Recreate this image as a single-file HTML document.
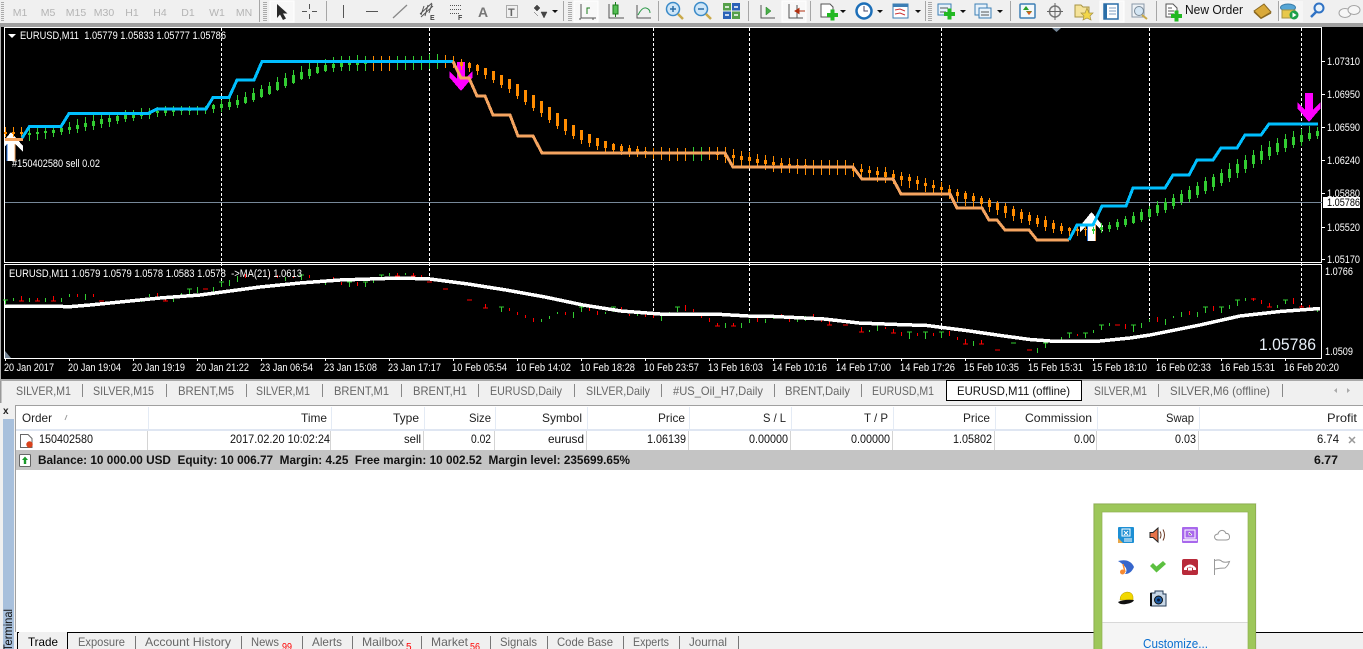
<!DOCTYPE html>
<html><head><meta charset="utf-8"><title>MT4</title>
<style>
html,body{margin:0;padding:0;background:#f0f0f0;overflow:hidden}
svg{display:block}
text{font-family:"Liberation Sans",sans-serif;white-space:pre}
.c{fill:#fff;font-size:11px}
.t{fill:#666;font-size:12px}
.h{fill:#222;font-size:12px}
.r{fill:#111;font-size:12px}
.b{fill:#111;font-size:12px;font-weight:bold}
.m{fill:#b4b4b4;font-size:10.5px;text-anchor:middle}
.red{fill:#f00;font-size:10px}
</style></head><body>
<svg width="1363" height="649" viewBox="0 0 1363 649" xmlns="http://www.w3.org/2000/svg">
<rect width="1363" height="649" fill="#f0f0f0"/>

<!-- TOOLBAR -->
<g>
<path d="M2.500 2V22" stroke="#aaa" stroke-width="3" stroke-dasharray="1 1"/>
<text class="m" x="20" y="16">M1</text><text class="m" x="48" y="16">M5</text><text class="m" x="76" y="16">M15</text><text class="m" x="104" y="16">M30</text><text class="m" x="132" y="16">H1</text><text class="m" x="160" y="16">H4</text><text class="m" x="188" y="16">D1</text><text class="m" x="217" y="16">W1</text><text class="m" x="244" y="16">MN</text>
<path d="M259.500 0V22M326.500 1V21M563.500 1V21M658.500 1V21M748.500 1V21M810.500 1V21M925.500 1V21M1010.500 1V21M1156.500 1V21M1278.500 1V21" stroke="#a6a6a6"/>
<path d="M265 2V22M570 2V22M930 2V22" stroke="#aaa" stroke-width="4" stroke-dasharray="1 1"/>
<rect x="270" y="1" width="24" height="21" fill="#f8f8f8" stroke="#fff"/>
<rect x="574" y="1" width="24" height="21" fill="#f8f8f8" stroke="#fff"/>
<rect x="782" y="1" width="24" height="21" fill="#f8f8f8" stroke="#fff"/>
<rect x="1100" y="1" width="24" height="21" fill="#f8f8f8" stroke="#fff"/>
<rect x="1279" y="1" width="24" height="21" fill="#f6f6f6"/>
<path d="M277 4V18L280 14.500L283 20L286 18.500L283 13.500H287.500Z" fill="#2a2a2a"/>
<path d="M309.500 4V9M309.500 14V19M302 11.500H307M312 11.500H317" stroke="#555" stroke-width="1"/>
<path d="M343.500 5V18" stroke="#555"/><path d="M366 11.500H378" stroke="#555"/><path d="M393 18L407 5" stroke="#888" stroke-width="1.300"/>
<path d="M420 14L432 3M421 17L433 6M424 6L421 15M428 5L425 16M432 4L429 13" stroke="#555" fill="none"/>
<text x="430" y="20" style="font-size:7px;font-weight:bold" fill="#444">E</text>
<path d="M450 5.500H462M450 9.500H462M450 13.500H460" stroke="#555" stroke-dasharray="1 1"/>
<text x="458" y="20" style="font-size:7px;font-weight:bold" fill="#444">F</text>
<text x="478" y="17" style="font-size:14px;font-weight:bold" fill="#777">A</text>
<rect x="506.500" y="5.500" width="11" height="12" fill="none" stroke="#666" stroke-dasharray="1 1"/>
<text x="508" y="16" style="font-size:11px;font-weight:bold" fill="#666">T</text>
<path d="M537 5L540 8L537 11L534 8ZM541 12L547 12L544 18Z M534 12L538 16" fill="#444" stroke="#444" stroke-width=".5"/>
<path d="M552 10H558L555 13Z" fill="#111"/>
<!-- chart type -->
<path d="M581 4V18H596M580 18V20M593 18V20" stroke="#555" fill="none"/><path d="M587 14V8H590" stroke="#1a7a1a" fill="none"/>
<path d="M609 4V18H624" stroke="#555" fill="none"/><rect x="613" y="5" width="5" height="9" fill="#55c055" stroke="#1a7a1a"/><path d="M615.500 2V5M615.500 14V17" stroke="#1a7a1a"/>
<path d="M637 5V18H651" stroke="#555" fill="none"/><path d="M638 15Q642 7 646 8T650 13" stroke="#2e9a4a" fill="none"/>
<!-- zoom -->
<circle cx="673" cy="9" r="6.500" fill="#cfe6f7" stroke="#3a8ac8" stroke-width="1.500"/><path d="M670 9H676M673 6V12" stroke="#2a6ea8" stroke-width="1.500"/><path d="M678 14L683 19" stroke="#c9a94a" stroke-width="2.500"/>
<circle cx="701" cy="9" r="6.500" fill="#cfe6f7" stroke="#3a8ac8" stroke-width="1.500"/><path d="M698 9H704" stroke="#2a6ea8" stroke-width="1.500"/><path d="M706 14L711 19" stroke="#c9a94a" stroke-width="2.500"/>
<rect x="723" y="3" width="8" height="7.500" fill="#55a04a"/><rect x="732" y="3" width="8" height="7.500" fill="#2a62b8"/><rect x="723" y="11.500" width="8" height="7.500" fill="#2a62b8"/><rect x="732" y="11.500" width="8" height="7.500" fill="#55a04a"/>
<path d="M725 7H729M734 7H738M725 15H729M734 15H738" stroke="#fff" stroke-width="1.500"/>
<path d="M761 5V18H775" stroke="#555" fill="none"/><path d="M766 7L771 11L766 15Z" fill="#49b049" stroke="#1a7a1a" stroke-width=".5"/>
<path d="M789 4V18H803M797 5V18" stroke="#555" fill="none"/><path d="M799 11H805M795 11L799 8.500V13.500Z" stroke="#b03010" fill="#b03010"/>
<path d="M821 4H830L833 7V17H821Z" fill="#fff" stroke="#555"/><rect x="827" y="13" width="11" height="4" fill="#22b822"/><rect x="830.500" y="9.500" width="4" height="11" fill="#22b822"/>
<path d="M840 10H846L843 13Z" fill="#111"/>
<circle cx="864" cy="11" r="7.500" fill="#fff" stroke="#1d6fb8" stroke-width="2.500"/><path d="M864 6V11H868" stroke="#446" fill="none"/>
<path d="M877 10H883L880 13Z" fill="#111"/>
<rect x="893" y="4" width="15" height="14" fill="#fff" stroke="#3d7fb5"/><rect x="893" y="4" width="15" height="3" fill="#3d7fb5"/><path d="M895 10L900 9L905 11M895 14L900 13L905 15" stroke="#c33" fill="none"/>
<path d="M915 10H921L918 13Z" fill="#111"/>
<rect x="938" y="4" width="13" height="11" fill="#e8f2fa" stroke="#3d7fb5"/><path d="M940 8H948M940 12H946" stroke="#555"/><rect x="944" y="12" width="11" height="4" fill="#22b822"/><rect x="947.500" y="8.500" width="4" height="11" fill="#22b822"/>
<path d="M960 10H966L963 13Z" fill="#111"/>
<rect x="975" y="4" width="12" height="11" fill="#e8f2fa" stroke="#3d7fb5"/><rect x="979" y="8" width="12" height="10" fill="#e8f2fa" stroke="#3d7fb5"/><path d="M981 12H989M981 15H989" stroke="#555"/>
<path d="M997 10H1003L1000 13Z" fill="#111"/>
<rect x="1020" y="4" width="15" height="14" rx="1" fill="#f4f8fb" stroke="#3d7fb5" stroke-width="1.500"/><path d="M1026 6L1023 10H1029ZM1029 15L1026 11H1032Z" fill="#29a029"/><path d="M1029 15L1026.500 11.500H1032Z" fill="#e05a20"/>
<circle cx="1055" cy="11.500" r="5.500" fill="none" stroke="#777" stroke-width="1.500"/><path d="M1055 3V20M1047 11.500H1063" stroke="#666"/>
<path d="M1075 5H1081L1083 7H1089V17H1075Z" fill="#f5e39a" stroke="#a89443"/><path d="M1087 8L1089 13H1093L1090 16L1091 20L1087 18L1083 20L1084 16L1081 13H1085Z" fill="#f2d648" stroke="#a89443" stroke-width=".7"/>
<rect x="1104" y="4" width="14" height="15" fill="#fff" stroke="#2a6ea8" stroke-width="1.500"/><rect x="1104" y="4" width="3" height="15" fill="#2a6ea8"/><path d="M1109 8H1116M1109 11H1116M1109 14H1116" stroke="#7d9cc0"/>
<rect x="1132" y="4" width="12" height="13" fill="#eef2f6" stroke="#8a99a8"/><circle cx="1139" cy="11" r="4.500" fill="#d4e6f4" stroke="#7a8a98"/><path d="M1142 15L1147 19" stroke="#c9a94a" stroke-width="2"/>
<path d="M1166 4H1173L1177 8V17H1166Z" fill="#fff" stroke="#555"/><path d="M1168 8H1172M1168 11H1174M1168 14H1174" stroke="#555"/><rect x="1171" y="14" width="11" height="4" fill="#22b822"/><rect x="1174.500" y="10.500" width="4" height="11" fill="#22b822"/>
<text x="1185" y="14" textLength="58" lengthAdjust="spacingAndGlyphs" style="font-size:12.500px" fill="#111">New Order</text>
<path d="M1254 11L1264 4L1271 12L1261 18Z" fill="#d9a93a" stroke="#8a6820"/><path d="M1254 12L1261 18.500L1271 13" stroke="#8a6820" fill="none"/>
<ellipse cx="1288" cy="7.500" rx="7.500" ry="3.500" fill="#56a6d6" stroke="#3a7ca8"/><path d="M1282 10H1295V18H1282Z" fill="#e8c84a" stroke="#a89443"/><circle cx="1294" cy="15" r="4.500" fill="#1ca048"/><path d="M1292.500 12.500L1296.500 15L1292.500 17.500Z" fill="#fff"/>
<circle cx="1319" cy="8" r="4.500" fill="#e8f2fa" stroke="#2f72c4" stroke-width="2"/><path d="M1316 12L1311 17" stroke="#2f72c4" stroke-width="2.500"/>
<ellipse cx="1345" cy="13" rx="6" ry="4.500" fill="#f6f6f6" stroke="#a4a4a4"/><ellipse cx="1354" cy="10" rx="6" ry="4.500" fill="#f6f6f6" stroke="#a4a4a4"/>
</g>
<rect y="23" width="1363" height="4" fill="#a0a0a0"/>

<!-- CHART -->
<rect y="27" width="1363" height="352" fill="#000"/>
<rect width="1" height="352" y="27" fill="#b0b0b0"/>
<path d="M4.500 27.500H1321.500V262.500H4.500ZM4.500 264.500H1321.500V358.500H4.500Z" fill="none" stroke="#fff"/>
<path d="M1052 28H1061L1056.500 32Z" fill="#778899"/>
<path d="M5 351L11 358H5Z" fill="#778899"/>
<path d="M1322 61.500H1325M1322 94.500H1325M1322 127.500H1325M1322 160.500H1325M1322 193.500H1325M1322 227.500H1325M1322 259.500H1325M5.500 359V361M69.500 359V361M133.500 359V361M197.500 359V361M261.500 359V361M325.500 359V361M389.500 359V361M453.500 359V361M517.500 359V361M581.500 359V361M645.500 359V361M709.500 359V361M773.500 359V361M837.500 359V361M901.500 359V361M965.500 359V361M1029.500 359V361M1093.500 359V361M1157.500 359V361M1221.500 359V361M1285.500 359V361" stroke="#fff" shape-rendering="crispEdges"/>

<!-- dashed -->
<path d="M221.500 28V287M429.500 28V279M653.500 28V313M749.500 28V312M941.500 28V330M1149.500 28V321M1301.500 28V307" stroke="#fff" stroke-dasharray="3 2" shape-rendering="crispEdges"/>
<path d="M5 202.500H1322" stroke="#778899" shape-rendering="crispEdges"/>

<!-- arrows -->
<g shape-rendering="crispEdges">
<path d="M1305 93H1313V110L1320.500 102V108.500L1309 122L1297.500 108.500V102L1305 110Z" fill="#f0f"/>
<path d="M457 62H465V79L472.500 71V77.500L461 91L449.500 77.500V71L457 79Z" fill="#f0f"/>
<path d="M7 161H15V144L23 152V146L11 132L4.500 140V147L7 144Z" fill="#fff"/>
<path d="M7 144V161" stroke="#1e6ee0"/><path d="M15 144V161" stroke="#f4a460"/>
<path d="M5 139.500H23" stroke="#f4a460" stroke-width="3"/>
<path d="M1088 241H1095V224L1103 232V226L1091.500 212L1080 226V232L1088 224Z" fill="#fff"/>
<path d="M1087.500 224V241" stroke="#1e6ee0"/><path d="M1095.500 224V241" stroke="#f4a460"/>
</g>

<!-- candles -->
<g shape-rendering="crispEdges" fill="none">
<path stroke="#32cd32" d="M29.500 127V141M37.500 127V140M45.500 127V139M53.500 125V137M61.500 124V135M69.500 122V134M77.500 119V133M85.500 117V131M93.500 115V130M101.500 115V128M109.500 114V127M117.500 113V124M125.500 110V122M133.500 110V121M141.500 108V119M149.500 108V119M157.500 107V117M165.500 106V116M173.500 106V116M181.500 106V115M189.500 106V115M197.500 106V115M205.500 106V114M213.500 104V113M221.500 100V112M229.500 97V110M237.500 95V108M245.500 92V104M253.500 88V102M261.500 85V98M269.500 82V95M277.500 77V91M285.500 73V88M293.500 70V84M301.500 66V80M309.500 63V79M317.500 61V74M325.500 59V72M333.500 57V72M341.500 56V71M349.500 56V71M357.500 55V71M365.500 56V71M397.500 56V70M405.500 56V70M413.500 56V70M421.500 56V70M429.500 54V69M437.500 54V69M693.500 147V161M701.500 147V161M1093.500 227V234M1101.500 223V233M1109.500 222V232M1117.500 219V230M1125.500 216V227M1133.500 212V224M1141.500 209V222M1149.500 206V219M1157.500 201V216M1165.500 198V213M1173.500 194V209M1181.500 190V205M1189.500 186V202M1197.500 182V198M1205.500 177V194M1213.500 174V191M1221.500 169V186M1229.500 163V182M1237.500 159V178M1245.500 155V173M1253.500 150V168M1261.500 145V164M1269.500 141V160M1277.500 138V155M1285.500 134V152M1293.500 131V148M1301.500 129V146M1309.500 126V141M1317.500 127V139"/>
<path stroke="#32cd32" stroke-width="3" d="M29.500 133V135M37.500 132V134M45.500 131V133M53.500 130V133M61.500 128V132M69.500 127V130M77.500 125V129M85.500 123V127M93.500 121V126M101.500 119V124M109.500 118V122M117.500 116V121M125.500 114V119M133.500 113V118M141.500 113V116M149.500 112V115M157.500 111V113M165.500 110V113M173.500 110V112M181.500 109V111M189.500 109V111M197.500 108V110M205.500 108V110M213.500 105V109M221.500 104V108M229.500 102V107M237.500 100V105M245.500 97V103M253.500 93V100M261.500 89V97M269.500 86V94M277.500 82V90M285.500 78V86M293.500 75V83M301.500 72V79M309.500 69V76M317.500 67V73M325.500 65V71M333.500 64V68M341.500 63V67M349.500 63V65M357.500 63V65M365.500 62V64M397.500 61V63M405.500 61V63M413.500 61V63M421.500 61V63M1093.500 229V231M1101.500 227V230M1109.500 225V229M1117.500 222V227M1125.500 219V225M1133.500 216V223M1141.500 212V220M1149.500 209V217M1157.500 205V213M1165.500 202V210M1173.500 198V206M1181.500 194V202M1189.500 190V199M1197.500 186V195M1205.500 181V191M1213.500 177V187M1221.500 173V183M1229.500 169V178M1237.500 164V173M1245.500 160V169M1253.500 155V164M1261.500 151V160M1269.500 147V156M1277.500 143V152M1285.500 139V148M1293.500 137V145M1301.500 135V142M1309.500 133V139M1317.500 131V136"/>
<path stroke="#ff8c00" d="M5.500 127V137M13.500 127V137M21.500 127V137M373.500 56V71M381.500 56V71M389.500 56V71M445.500 55V68M453.500 56V68M461.500 59V70M469.500 62V72M477.500 64V75M485.500 68V79M493.500 71V83M501.500 75V88M509.500 79V93M517.500 84V99M525.500 90V105M533.500 95V111M541.500 101V117M549.500 107V123M557.500 113V129M565.500 119V135M573.500 125V139M581.500 130V144M589.500 134V147M597.500 138V150M605.500 141V152M613.500 143V154M621.500 144V155M629.500 145V157M637.500 146V157M645.500 147V158M653.500 148V159M661.500 147V160M669.500 148V161M677.500 148V161M685.500 148V161M709.500 147V160M717.500 147V160M725.500 147V163M733.500 149V165M741.500 151V166M749.500 152V167M757.500 154V168M765.500 155V170M773.500 156V172M781.500 158V173M789.500 158V173M797.500 159V174M805.500 159V175M813.500 160V175M821.500 160V175M829.500 160V175M837.500 160V175M845.500 160V175M853.500 163V177M861.500 164V178M869.500 166V180M877.500 167V182M885.500 167V183M893.500 170V184M901.500 172V186M909.500 174V188M917.500 176V190M925.500 178V192M933.500 180V194M941.500 182V196M949.500 185V199M957.500 189V202M965.500 191V206M973.500 193V207M981.500 196V208M989.500 198V212M997.500 201V215M1005.500 203V218M1013.500 206V221M1021.500 209V223M1029.500 212V225M1037.500 215V227M1045.500 216V231M1053.500 220V233M1061.500 223V234M1069.500 227V236M1077.500 227V236M1085.500 227V236"/>
<path stroke="#ff8c00" stroke-width="3" d="M5.500 132V134M13.500 132V134M21.500 132V134M461.500 62V66M469.500 63V68M477.500 65V71M485.500 68V75M493.500 71V80M501.500 75V85M509.500 79V89M517.500 84V96M525.500 90V102M533.500 95V108M541.500 101V113M549.500 107V120M557.500 113V126M565.500 119V131M573.500 125V136M581.500 130V140M589.500 134V143M597.500 138V146M605.500 141V148M613.500 144V150M621.500 146V151M629.500 148V152M637.500 149V153M645.500 151V154M653.500 152V154M661.500 152V154M669.500 152V154M677.500 152V154M685.500 152V154M709.500 152V154M717.500 153V155M725.500 153V157M733.500 155V158M741.500 156V160M749.500 157V161M757.500 159V163M765.500 160V164M773.500 162V165M781.500 163V166M789.500 164V167M797.500 165V167M805.500 165V167M813.500 166V167M821.500 166V167M829.500 166V167M837.500 166V167M845.500 166V167M853.500 168V171M861.500 169V172M869.500 170V173M877.500 171V175M885.500 172V177M893.500 174V178M901.500 176V180M909.500 177V181M917.500 180V184M925.500 183V186M933.500 185V188M941.500 187V190M949.500 189V193M957.500 192V196M965.500 193V199M973.500 196V201M981.500 198V204M989.500 200V207M997.500 203V210M1005.500 206V213M1013.500 209V216M1021.500 212V219M1029.500 215V221M1037.500 218V224M1045.500 220V227M1053.500 223V229M1061.500 226V231M1069.500 228V231M1077.500 229V231M1085.500 229V230"/>
<!-- lines -->
<path stroke="#00bfff" stroke-width="3" stroke-linejoin="miter" d="M22 138L29.500 126.500H61L69 113.500H148L157 109H206L213 97.500H229L237 80H254L262 61.500H453"/>
<path stroke="#f4a460" stroke-width="3" d="M453 61.500L461 78H469L477 96H485L493 115H510L518 136H533L542 153H725L733 167H853L862 179H893L901 194H950L957 208H982L989 220H997L1005 230H1029L1037 240H1069"/>
<path stroke="#00bfff" stroke-width="3" d="M1069 240L1077 225H1093L1102 206H1126L1133 188H1165L1173 175H1189L1197 160H1213L1221 148H1237L1245 135H1261L1269 124H1318"/>
</g>

<!-- sub window -->
<g shape-rendering="crispEdges" fill="none">
<path stroke="#32cd32" d="M5.500 300V304M3 300H8M13.500 298V301M29.500 298V302M45.500 298V302M61.500 298V302M69.500 294V297M85.500 294V300M141.500 300V302M149.500 294V297M173.500 298V302M181.500 293V297M189.500 289V295M187 289H192M197.500 287V293M213.500 287V293M221.500 282V287M219 282H224M229.500 280V286M237.500 276V282M285.500 277V281M301.500 275V280M299 275H304M325.500 280V285M349.500 282V287M347 282H352M365.500 282V287M363 282H368M373.500 279V283M381.500 275V280M379 275H384M389.500 273V276M405.500 273V275M501.500 307V312M499 307H504M541.500 319V322M549.500 316V319M557.500 312V314M573.500 312V318M581.500 307V312M579 307H584M605.500 312V314M613.500 307V312M611 307H616M637.500 314V316M661.500 316V321M669.500 312V314M677.500 307V312M675 307H680M725.500 323V328M741.500 323V328M749.500 319V323M765.500 319V323M773.500 317V319M797.500 319V322M805.500 316V321M869.500 330V332M877.500 325V331M875 325H880M909.500 332V339M907 332H912M925.500 332V339M923 332H928M941.500 332V338M939 332H944M973.500 341V346M1011 343H1016M1037.500 348V353M1045.500 343V348M1043 343H1048M1061.500 337V340M1069.500 333V338M1067 333H1072M1085.500 333V338M1083 333H1088M1093.500 330V333M1101.500 325V330M1099 325H1104M1109.500 323V326M1133.500 325V332M1131 325H1136M1141.500 323V328M1149.500 319V322M1165.500 319V325M1173.500 316V318M1181.500 312V317M1197.500 312V317M1205.500 307V313M1203 307H1208M1221.500 307V313M1219 307H1224M1229.500 305V309M1237.500 300V306M1235 300H1240M1245.500 298V301M1277.500 305V308M1285.500 300V304M1283 300H1288M1317.500 307V312"/>
<path stroke="#f00" d="M21.500 296V301M19 301H24M37.500 298V301M35 301H40M53.500 296V301M51 301H56M77.500 294V297M93.500 294V297M99 301H104M157.500 293V297M165.500 297V301M163 301H168M203 289H208M245.500 274V278M269.500 273V277M277.500 275V278M293.500 276V278M309.500 275V278M317.500 280V282M333.500 277V281M341.500 282V285M357.500 282V286M397.500 273V276M395 276H400M413.500 273V276M411 276H416M421.500 275V277M427 282H432M443 289H448M467 300H472M485.500 304V308M483 308H488M509.500 308V311M517.500 312V315M525.500 315V318M533.500 318V322M565.500 312V315M589.500 308V311M597.500 311V315M621.500 307V311M629.500 314V316M645.500 311V317M653.500 315V318M685.500 305V311M693.500 309V312M701.500 315V318M709.500 318V322M717.500 323V326M715 326H720M733.500 323V326M731 326H736M757.500 318V322M781.500 314V316M789.500 319V322M813.500 314V317M821.500 319V322M829.500 321V325M827 325H832M843 325H848M861.500 327V332M859 332H864M885.500 327V329M893.500 329V333M891 333H896M901.500 332V336M917.500 333V336M933.500 333V336M949.500 331V336M957.500 337V340M965.500 339V344M963 344H968M981.500 340V344M979 344H984M995 350H1000M1027 350H1032M1077.500 334V336M1115 325H1120M1125.500 324V329M1157.500 317V322M1189.500 311V315M1213.500 306V311M1251 299H1256M1253.500 298V301M1261.500 300V304M1269.500 303V307M1267 307H1272M1293.500 298V304M1301.500 305V307M1299 307H1304M1309.500 305V311"/>
<path stroke="#fff" stroke-width="3.500" d="M5 306H60L66 307L90 305L130 301L160 298L200 295L230 291L260 287L300 283L340 280L400 278L430 279L468 284L506 290L545 297L583 305L621 311L660 314H713L748 316L774 316.500L824 319L859 323L897 324.500L927 325.500L966 330.500L1004 336L1030 339.500L1050 341H1100L1130 338L1150 335L1200 325L1240 316L1280 311.500L1320 308.500"/>
</g>

<!-- chart texts -->
<path d="M8 34H16L12 38Z" fill="#fff"/>
<text class="c" x="20" y="39" textLength="206" lengthAdjust="spacingAndGlyphs">EURUSD,M11  1.05779 1.05833 1.05777 1.05786</text>
<text class="c" x="12" y="167" textLength="88" lengthAdjust="spacingAndGlyphs">#150402580 sell 0.02</text>
<text class="c" x="9" y="277" textLength="293" lengthAdjust="spacingAndGlyphs">EURUSD,M11 1.0579 1.0579 1.0578 1.0583 1.0578  -&gt;MA(21) 1.0613</text>
<g class="c">
<text class="c" x="1327" y="65" textLength="33" lengthAdjust="spacingAndGlyphs">1.07310</text>
<text class="c" x="1327" y="98" textLength="33" lengthAdjust="spacingAndGlyphs">1.06950</text>
<text class="c" x="1327" y="131" textLength="33" lengthAdjust="spacingAndGlyphs">1.06590</text>
<text class="c" x="1327" y="164" textLength="33" lengthAdjust="spacingAndGlyphs">1.06240</text>
<text class="c" x="1327" y="197" textLength="33" lengthAdjust="spacingAndGlyphs">1.05880</text>
<rect x="1323" y="197" width="37" height="11" fill="#fff"/>
<text x="1327" y="206" textLength="33" lengthAdjust="spacingAndGlyphs" style="font-size:11px" fill="#000">1.05786</text>
<text class="c" x="1327" y="231" textLength="33" lengthAdjust="spacingAndGlyphs">1.05520</text>
<text class="c" x="1327" y="263" textLength="33" lengthAdjust="spacingAndGlyphs">1.05170</text>
<text class="c" x="1325" y="275" textLength="28" lengthAdjust="spacingAndGlyphs">1.0766</text>
<text class="c" x="1325" y="355" textLength="28" lengthAdjust="spacingAndGlyphs">1.0509</text>
</g>
<text x="1259" y="350" textLength="57" lengthAdjust="spacingAndGlyphs" style="font-size:16.500px" fill="#e8f0f8">1.05786</text>
<text class="c" x="4" y="371" textLength="50" lengthAdjust="spacingAndGlyphs">20 Jan 2017</text>
<text class="c" x="68" y="371" textLength="53" lengthAdjust="spacingAndGlyphs">20 Jan 19:04</text>
<text class="c" x="132" y="371" textLength="53" lengthAdjust="spacingAndGlyphs">20 Jan 19:19</text>
<text class="c" x="196" y="371" textLength="53" lengthAdjust="spacingAndGlyphs">20 Jan 21:22</text>
<text class="c" x="260" y="371" textLength="53" lengthAdjust="spacingAndGlyphs">23 Jan 06:54</text>
<text class="c" x="324" y="371" textLength="53" lengthAdjust="spacingAndGlyphs">23 Jan 15:08</text>
<text class="c" x="388" y="371" textLength="53" lengthAdjust="spacingAndGlyphs">23 Jan 17:17</text>
<text class="c" x="452" y="371" textLength="55" lengthAdjust="spacingAndGlyphs">10 Feb 05:54</text>
<text class="c" x="516" y="371" textLength="55" lengthAdjust="spacingAndGlyphs">10 Feb 14:02</text>
<text class="c" x="580" y="371" textLength="55" lengthAdjust="spacingAndGlyphs">10 Feb 18:28</text>
<text class="c" x="644" y="371" textLength="55" lengthAdjust="spacingAndGlyphs">10 Feb 23:57</text>
<text class="c" x="708" y="371" textLength="55" lengthAdjust="spacingAndGlyphs">13 Feb 16:03</text>
<text class="c" x="772" y="371" textLength="55" lengthAdjust="spacingAndGlyphs">14 Feb 10:16</text>
<text class="c" x="836" y="371" textLength="55" lengthAdjust="spacingAndGlyphs">14 Feb 17:00</text>
<text class="c" x="900" y="371" textLength="55" lengthAdjust="spacingAndGlyphs">14 Feb 17:26</text>
<text class="c" x="964" y="371" textLength="55" lengthAdjust="spacingAndGlyphs">15 Feb 10:35</text>
<text class="c" x="1028" y="371" textLength="55" lengthAdjust="spacingAndGlyphs">15 Feb 15:31</text>
<text class="c" x="1092" y="371" textLength="55" lengthAdjust="spacingAndGlyphs">15 Feb 18:10</text>
<text class="c" x="1156" y="371" textLength="55" lengthAdjust="spacingAndGlyphs">16 Feb 02:33</text>
<text class="c" x="1220" y="371" textLength="55" lengthAdjust="spacingAndGlyphs">16 Feb 15:31</text>
<text class="c" x="1284" y="371" textLength="55" lengthAdjust="spacingAndGlyphs">16 Feb 20:20</text>

<!-- CHART TABS -->
<rect y="379" width="1363" height="2" fill="#a8a8a8"/>
<rect y="381" width="1363" height="22" fill="#f0f0f0"/>
<rect x="0" y="381" width="1.500" height="22" fill="#999"/>
<path d="M82.500 384V397M166.500 384V397M246.500 384V397M322.500 384V397M401.500 384V397M478.500 384V397M574.500 384V397M661.500 384V397M774.500 384V397M861.500 384V397M1158.500 384V397M1282.500 384V397" stroke="#888" shape-rendering="crispEdges"/>
<rect x="946.500" y="380.500" width="135" height="20" fill="#fff" stroke="#000" stroke-width="1"/>
<text class="t" x="16" y="395" textLength="55" lengthAdjust="spacingAndGlyphs">SILVER,M1</text>
<text class="t" x="93" y="395" textLength="61" lengthAdjust="spacingAndGlyphs">SILVER,M15</text>
<text class="t" x="178" y="395" textLength="56" lengthAdjust="spacingAndGlyphs">BRENT,M5</text>
<text class="t" x="256" y="395" textLength="54" lengthAdjust="spacingAndGlyphs">SILVER,M1</text>
<text class="t" x="334" y="395" textLength="55" lengthAdjust="spacingAndGlyphs">BRENT,M1</text>
<text class="t" x="413" y="395" textLength="54" lengthAdjust="spacingAndGlyphs">BRENT,H1</text>
<text class="t" x="490" y="395" textLength="72" lengthAdjust="spacingAndGlyphs">EURUSD,Daily</text>
<text class="t" x="586" y="395" textLength="64" lengthAdjust="spacingAndGlyphs">SILVER,Daily</text>
<text class="t" x="673" y="395" textLength="90" lengthAdjust="spacingAndGlyphs">#US_Oil_H7,Daily</text>
<text class="t" x="785" y="395" textLength="65" lengthAdjust="spacingAndGlyphs">BRENT,Daily</text>
<text class="t" x="872" y="395" textLength="62" lengthAdjust="spacingAndGlyphs">EURUSD,M1</text>
<text x="957" y="395" textLength="113" lengthAdjust="spacingAndGlyphs" style="font-size:12px" fill="#111">EURUSD,M11 (offline)</text>
<text class="t" x="1094" y="395" textLength="53" lengthAdjust="spacingAndGlyphs">SILVER,M1</text>
<text class="t" x="1170" y="395" textLength="100" lengthAdjust="spacingAndGlyphs">SILVER,M6 (offline)</text>
<path d="M1337 388V393L1334 390.500ZM1347 388V393L1350 390.500Z" fill="#aaa"/>

<!-- TERMINAL -->
<rect y="403" width="1363" height="246" fill="#f0f0f0"/>
<rect x="15" y="405" width="1348" height="227" fill="#fff"/>
<rect x="15" y="405" width="1348" height="1" fill="#a0a0a0"/>
<rect x="15" y="405" width="1" height="227" fill="#a0a0a0"/>
<text x="3" y="414" style="font-size:10px;font-weight:bold" fill="#222">x</text>
<rect x="3" y="419" width="11" height="230" fill="#a8c0dc"/>
<text transform="translate(12 649) rotate(-90)" x="-2" y="0" textLength="42" lengthAdjust="spacingAndGlyphs" style="font-size:12px" fill="#111">Terminal</text>
<!-- header -->
<rect x="16" y="429" width="1347" height="2" fill="#dfe6f2"/>
<path d="M148.500 407V429M331.500 407V429M424.500 407V429M495.500 407V429M587.500 407V429M689.500 407V429M791.500 407V429M893.500 407V429M995.500 407V429M1097.500 407V429M1199.500 407V429" stroke="#e4ebf5" shape-rendering="crispEdges"/>
<path d="M147.500 431V450M330.500 431V450M423.500 431V450M494.500 431V450M586.500 431V450M688.500 431V450M790.500 431V450M892.500 431V450M994.500 431V450M1096.500 431V450M1198.500 431V450" stroke="#d4d4d4" shape-rendering="crispEdges"/>
<text class="h" x="22" y="422" textLength="30" lengthAdjust="spacingAndGlyphs">Order</text>
<path d="M65 420L67 415" stroke="#999"/>
<text class="h" x="301" y="422" textLength="26" lengthAdjust="spacingAndGlyphs">Time</text>
<text class="h" x="393" y="422" textLength="26" lengthAdjust="spacingAndGlyphs">Type</text>
<text class="h" x="469" y="422" textLength="22" lengthAdjust="spacingAndGlyphs">Size</text>
<text class="h" x="542" y="422" textLength="40" lengthAdjust="spacingAndGlyphs">Symbol</text>
<text class="h" x="658" y="422" textLength="27" lengthAdjust="spacingAndGlyphs">Price</text>
<text class="h" x="763" y="422" textLength="23" lengthAdjust="spacingAndGlyphs">S / L</text>
<text class="h" x="864" y="422" textLength="24" lengthAdjust="spacingAndGlyphs">T / P</text>
<text class="h" x="963" y="422" textLength="27" lengthAdjust="spacingAndGlyphs">Price</text>
<text class="h" x="1025" y="422" textLength="67" lengthAdjust="spacingAndGlyphs">Commission</text>
<text class="h" x="1166" y="422" textLength="28" lengthAdjust="spacingAndGlyphs">Swap</text>
<text class="h" x="1327" y="422" textLength="30" lengthAdjust="spacingAndGlyphs">Profit</text>
<!-- row -->
<path d="M20.500 434.500H28L32 438.500V447.500H20.500Z" fill="#fff" stroke="#666"/><circle cx="29.500" cy="444.500" r="3.200" fill="#d9421c"/>
<text class="r" x="39" y="443" textLength="54" lengthAdjust="spacingAndGlyphs">150402580</text>
<text class="r" x="230" y="443" textLength="100" lengthAdjust="spacingAndGlyphs">2017.02.20 10:02:24</text>
<text class="r" x="404" y="443" textLength="17" lengthAdjust="spacingAndGlyphs">sell</text>
<text class="r" x="471" y="443" textLength="20" lengthAdjust="spacingAndGlyphs">0.02</text>
<text class="r" x="548" y="443" textLength="36" lengthAdjust="spacingAndGlyphs">eurusd</text>
<text class="r" x="647" y="443" textLength="39" lengthAdjust="spacingAndGlyphs">1.06139</text>
<text class="r" x="749" y="443" textLength="39" lengthAdjust="spacingAndGlyphs">0.00000</text>
<text class="r" x="851" y="443" textLength="39" lengthAdjust="spacingAndGlyphs">0.00000</text>
<text class="r" x="953" y="443" textLength="39" lengthAdjust="spacingAndGlyphs">1.05802</text>
<text class="r" x="1074" y="443" textLength="21" lengthAdjust="spacingAndGlyphs">0.00</text>
<text class="r" x="1175" y="443" textLength="21" lengthAdjust="spacingAndGlyphs">0.03</text>
<text class="r" x="1317" y="443" textLength="22" lengthAdjust="spacingAndGlyphs">6.74</text>
<path d="M1349 437L1355 443M1355 437L1349 443" stroke="#999" stroke-width="1.500"/>
<!-- summary -->
<rect x="16" y="450" width="1347" height="20" fill="#c4c4c4"/>
<rect x="19.500" y="454.500" width="11" height="12" rx="1" fill="#fff" stroke="#666"/><path d="M25 456.500L28 460H26.200V464H23.800V460H22Z" fill="#1a9a2a"/>
<text class="b" x="38" y="464" textLength="592" lengthAdjust="spacingAndGlyphs">Balance: 10 000.00 USD  Equity: 10 006.77  Margin: 4.25  Free margin: 10 002.52  Margin level: 235699.65%</text>
<text class="b" x="1314" y="464" textLength="24" lengthAdjust="spacingAndGlyphs">6.77</text>
<!-- bottom tabs -->
<rect x="68" y="633" width="1295" height="16" fill="#f0f0f0"/>
<path d="M68 632.500H1363M17.500 632V649M17 632.500H19M67.500 632V649" stroke="#000" shape-rendering="crispEdges"/>
<path d="M135.500 636V649M241.500 636V649M302.500 636V649M352.500 636V649M421.500 636V649M490.500 636V649M547.500 636V649M623.500 636V649M679.500 636V649M738.500 636V649" stroke="#777" shape-rendering="crispEdges"/>
<text x="28" y="646" textLength="30" lengthAdjust="spacingAndGlyphs" style="font-size:12px" fill="#000">Trade</text>
<text class="t" x="78" y="646" textLength="47" lengthAdjust="spacingAndGlyphs">Exposure</text>
<text class="t" x="145" y="646" textLength="86" lengthAdjust="spacingAndGlyphs">Account History</text>
<text class="t" x="251" y="646" textLength="28" lengthAdjust="spacingAndGlyphs">News</text>
<text class="red" x="282" y="650" textLength="10" lengthAdjust="spacingAndGlyphs">99</text>
<text class="t" x="312" y="646" textLength="30" lengthAdjust="spacingAndGlyphs">Alerts</text>
<text class="t" x="362" y="646" textLength="42" lengthAdjust="spacingAndGlyphs">Mailbox</text>
<text class="red" x="406" y="650">5</text>
<text class="t" x="431" y="646" textLength="37" lengthAdjust="spacingAndGlyphs">Market</text>
<text class="red" x="470" y="650" textLength="10" lengthAdjust="spacingAndGlyphs">56</text>
<text class="t" x="500" y="646" textLength="37" lengthAdjust="spacingAndGlyphs">Signals</text>
<text class="t" x="557" y="646" textLength="56" lengthAdjust="spacingAndGlyphs">Code Base</text>
<text class="t" x="633" y="646" textLength="36" lengthAdjust="spacingAndGlyphs">Experts</text>
<text class="t" x="689" y="646" textLength="38" lengthAdjust="spacingAndGlyphs">Journal</text>

<!-- POPUP -->
<rect x="1093" y="503" width="164" height="148" fill="#000" opacity=".05"/>
<rect x="1094" y="504" width="161.500" height="146" fill="#9dc75a" stroke="#8fb050"/>
<rect x="1102" y="512" width="146" height="140" fill="#fff" stroke="#8fb050" stroke-width=".7"/>
<rect x="1102.500" y="622" width="145" height="28" fill="#f5f5f5"/>
<rect x="1102.500" y="622" width="145" height="1" fill="#d8d8d8"/>
<text x="1143" y="648" textLength="65" lengthAdjust="spacingAndGlyphs" style="font-size:12.500px" fill="#0a6ecf">Customize...</text>
<!-- icon 1 -->
<rect x="1118" y="527" width="16" height="16" rx="1" fill="#1d8fd4"/><rect x="1122" y="529" width="8" height="7" fill="none" stroke="#fff"/><path d="M1124 531L1128 535M1128 531L1124 535M1124 539H1132M1124 541H1132" stroke="#fff"/><path d="M1118 538L1123 543H1118Z" fill="#e8a84a"/>
<!-- speaker -->
<path d="M1150 532.500H1153L1158 528V542L1153 537.500H1150Z" fill="#e8744a" stroke="#222" stroke-width="1"/><path d="M1160 531.500Q1162 535 1160 538.500M1163 529.500Q1166 535 1163 540.500" fill="none" stroke="#6b3a24"/>
<!-- purple -->
<rect x="1182" y="527" width="16" height="16" rx="1" fill="#a868ec"/><rect x="1185" y="530" width="10" height="8" fill="none" stroke="#fff"/><path d="M1183 540H1197" stroke="#fff" stroke-width="1.500"/><path d="M1189 532V535H1192M1189 532L1192 535" stroke="#fff" stroke-width=".8"/>
<!-- cloud -->
<path d="M1218 540H1226Q1230 540 1229.500 536.500Q1229 533 1226 533.500Q1224 529 1220 531Q1218 532.500 1218 534Q1214.500 534.500 1214.500 537Q1215 540 1218 540Z" fill="#fff" stroke="#999"/>
<!-- swoosh -->
<path d="M1118 561Q1130 558 1134 567Q1131 574 1125 574Q1130 568 1118 561Z" fill="#3666cc"/><path d="M1123 564L1125 572" stroke="#f58a32" stroke-width="1.500"/><circle cx="1122.500" cy="572" r="2.500" fill="#f58a32"/>
<!-- check -->
<path d="M1150 566L1153 563L1156.500 566.500L1163 561L1166 564L1156.500 572.500Z" fill="#5cc040"/>
<!-- red phone -->
<rect x="1182" y="559" width="16" height="16" rx="2" fill="#b82a3a"/><path d="M1184 568Q1190 561 1196 568V570H1193V568Q1190 565.500 1187 568V570H1184Z" fill="#fff"/><rect x="1188" y="567.500" width="4" height="3" fill="#fff"/>
<!-- flag -->
<path d="M1214.500 559V575M1215 560.500Q1220 559 1222 561.500Q1225 563 1229.500 561.500Q1228 566 1225 568Q1220 568 1215 569" fill="#fff" stroke="#999"/>
<!-- hat -->
<path d="M1120 600Q1120 593 1127 592Q1134 592 1133 600Z" fill="#f2d800" stroke="#b89b00" stroke-width=".5"/><path d="M1118 602Q1124 599 1134 600Q1133 603 1126 604Q1120 605 1118 602Z" fill="#111"/>
<!-- camera -->
<path d="M1151 593H1155V591H1163V594H1166V606H1151Z" fill="#c8d8e8" stroke="#233a56" stroke-width="1"/><circle cx="1158.500" cy="600" r="4" fill="#1f5fa8" stroke="#111"/><circle cx="1158.500" cy="600" r="1.500" fill="#0a1a3a"/><path d="M1151 593V606" stroke="#111" stroke-width="2"/>
</svg>
</body></html>
